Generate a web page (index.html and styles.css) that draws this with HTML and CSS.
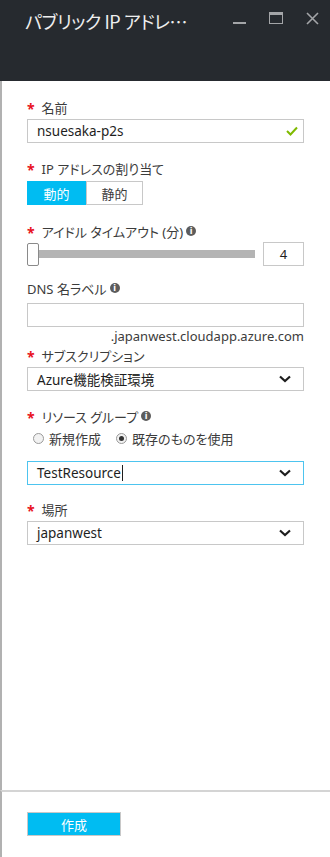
FILE: index.html
```html
<!DOCTYPE html>
<html lang="ja">
<head>
  <meta charset="UTF-8">
  <meta name="viewport" content="width=device-width, initial-scale=1.0">
  <title>パブリック IP アドレス</title>
  <link rel="stylesheet" href="styles.css">
</head>
<body>
  <div class="blade">
    <div class="blade-header">
      <h1 class="blade-title">パブリック IP アドレ…</h1>
      <div class="blade-controls">
        <span class="ctl ctl-min"></span>
        <span class="ctl ctl-max"></span>
        <svg class="ctl-close" width="13" height="13" viewBox="0 0 13 13">
          <path d="M1 1 L12 12 M12 1 L1 12" stroke="#a3a5a8" stroke-width="1.6" fill="none"/>
        </svg>
      </div>
    </div>

    <div class="blade-content">
      <div class="field field-name">
        <label class="field-label"><span class="req">*</span>名前</label>
        <div class="input-box">
          <span class="input-text">nsuesaka-p2s</span>
          <svg class="check" width="12" height="10" viewBox="0 0 12 10">
            <path d="M1 5 L4.5 8.5 L11 1.5" stroke="#7fba00" stroke-width="2" fill="none"/>
          </svg>
        </div>
      </div>

      <div class="field field-ip">
        <label class="field-label"><span class="req">*</span>IP アドレスの割り当て</label>
        <div class="toggle">
          <span class="toggle-opt active">動的</span>
          <span class="toggle-opt">静的</span>
        </div>
      </div>

      <div class="field field-timeout">
        <label class="field-label"><span class="req">*</span>アイドル タイムアウト (分)<span class="info">i</span></label>
        <div class="slider-row">
          <span class="slider-thumb"></span>
          <span class="slider-track"></span>
          <span class="slider-value">4</span>
        </div>
      </div>

      <div class="field field-dns">
        <label class="field-label">DNS 名ラベル<span class="info">i</span></label>
        <div class="input-box"></div>
        <div class="suffix">.japanwest.cloudapp.azure.com</div>
      </div>

      <div class="field field-sub">
        <label class="field-label"><span class="req">*</span>サブスクリプション</label>
        <div class="input-box select">
          <span class="input-text">Azure機能検証環境</span>
          <svg class="chevron" width="12" height="8" viewBox="0 0 12 8"><path d="M1 1.5 L6 6 L11 1.5" stroke="#1e1e1e" stroke-width="2.2" fill="none"/></svg>
        </div>
      </div>

      <div class="field field-rg">
        <label class="field-label"><span class="req">*</span>リソース グループ<span class="info">i</span></label>
        <div class="radio-row">
          <span class="radio"><span class="radio-dot"></span>新規作成</span>
          <span class="radio checked"><span class="radio-dot"></span>既存のものを使用</span>
        </div>
        <div class="input-box select focused">
          <span class="input-text">TestResource<span class="caret"></span></span>
          <svg class="chevron" width="12" height="8" viewBox="0 0 12 8"><path d="M1 1.5 L6 6 L11 1.5" stroke="#1e1e1e" stroke-width="2.2" fill="none"/></svg>
        </div>
      </div>

      <div class="field field-loc">
        <label class="field-label"><span class="req">*</span>場所</label>
        <div class="input-box select">
          <span class="input-text">japanwest</span>
          <svg class="chevron" width="12" height="8" viewBox="0 0 12 8"><path d="M1 1.5 L6 6 L11 1.5" stroke="#1e1e1e" stroke-width="2.2" fill="none"/></svg>
        </div>
      </div>
    </div>

    <div class="blade-footer">
      <button class="create-btn">作成</button>
    </div>
  </div>
</body>
</html>
```

FILE: styles.css
```css
body {
  margin: 0;
  font-family: "Noto Sans", "Noto Sans CJK JP", sans-serif;
  font-feature-settings: "palt";
  background: #fff;
}

.blade {
  display: flex;
  flex-direction: column;
  height: 100vh;
  width: 330px;
}

.blade-header {
  height: 81px;
  background: #262a2f;
  display: flex;
  align-items: flex-start;
  justify-content: space-between;
  padding: 0 11px 0 25px;
}

.blade-title {
  margin: 7px 0 0;
  font-family: "Noto Sans CJK JP", sans-serif;
  font-size: 18px;
  font-weight: normal;
  line-height: 28px;
  color: #eeeeee;
  letter-spacing: -0.4px;
}

.blade-controls {
  display: flex;
  align-items: flex-start;
  padding-top: 12px;
}

.ctl-min {
  width: 13px;
  height: 2px;
  background: #a3a5a8;
  margin-top: 10px;
}

.ctl-max {
  width: 12px;
  height: 8px;
  border: 1.5px solid #a3a5a8;
  border-top-width: 3px;
  margin-left: 23px;
}

.ctl-close {
  margin-left: 23px;
}

.blade-content {
  flex: 1;
  border-left: 2px solid #b1b1b1;
  padding: 17px 26px 0 25px;
}

.field-label {
  display: flex;
  align-items: center;
  height: 18px;
  font-size: 13px;
  color: #3c3c3c;
  margin-bottom: 3px;
}

.req {
  color: #e81123;
  font-weight: bold;
  font-size: 14px;
  margin-right: 7px;
  margin-top: 2px;
}

.info {
  display: inline-flex;
  align-items: center;
  justify-content: center;
  width: 10px;
  height: 10px;
  border-radius: 50%;
  background: #5c5c5c;
  color: #fff;
  font-family: "DejaVu Sans", sans-serif;
  font-size: 8px;
  font-weight: bold;
  margin-left: 3px;
}

.input-box {
  box-sizing: border-box;
  height: 24px;
  border: 1px solid #c8c8c8;
  display: flex;
  align-items: center;
  justify-content: space-between;
  padding: 0 4px 0 9px;
}

.input-text {
  font-size: 13.5px;
  color: #1e1e1e;
  display: flex;
  align-items: center;
}

.check {
  margin-right: 1px;
}

.select .chevron {
  margin-right: 8px;
}

.focused {
  border-color: #4dc4ef;
}

.caret {
  display: inline-block;
  width: 1px;
  height: 16px;
  background: #1e1e1e;
  margin-left: 1px;
}

.field-name {
  margin-bottom: 16px;
}

.field-ip {
  margin-bottom: 17px;
}

.field-ip .field-label {
  margin-bottom: 4px;
}

.toggle {
  display: flex;
  width: 116px;
  height: 24px;
  box-sizing: border-box;
  border: 1px solid #c8c8c8;
}

.toggle-opt {
  flex: 1;
  display: flex;
  align-items: center;
  justify-content: center;
  font-size: 13px;
  color: #3c3c3c;
}

.toggle-opt.active {
  flex: 0 0 59px;
  background: #00bcf2;
  color: #fff;
  margin: -1px 0 -1px -1px;
  border-right: 1px solid #c8c8c8;
}

.field-timeout {
  margin-bottom: 13px;
}

.field-timeout .field-label {
  margin-bottom: 2px;
}

.slider-row {
  display: flex;
  align-items: center;
  height: 24px;
}

.slider-thumb {
  box-sizing: border-box;
  width: 12px;
  height: 23px;
  border: 1px solid #8a8a8a;
  border-radius: 2px;
  background: #fff;
}

.slider-track {
  flex: 1;
  height: 8px;
  background: #b4b4b4;
}

.slider-value {
  box-sizing: border-box;
  width: 41px;
  height: 24px;
  margin-left: 8px;
  border: 1px solid #c8c8c8;
  display: flex;
  align-items: center;
  justify-content: center;
  font-size: 13px;
  color: #1e1e1e;
}

.field-dns .field-label {
  margin-bottom: 6px;
}

.suffix {
  text-align: right;
  font-size: 13px;
  color: #3c3c3c;
  line-height: 19px;
}

.field-sub {
  margin-bottom: 16px;
}

.radio-row {
  display: flex;
  align-items: center;
  height: 18px;
  margin-top: 4px;
  margin-bottom: 14px;
  padding-left: 6px;
}

.radio {
  display: flex;
  align-items: center;
  font-size: 13px;
  color: #3c3c3c;
  margin-right: 15px;
}

.radio-dot {
  box-sizing: border-box;
  width: 11px;
  height: 11px;
  border-radius: 50%;
  border: 1px solid #9a9a9a;
  background: #f2f2f2;
  margin-right: 5px;
  display: flex;
  align-items: center;
  justify-content: center;
}

.radio.checked .radio-dot::after {
  content: "";
  width: 5px;
  height: 5px;
  border-radius: 50%;
  background: #333;
}

.field-rg {
  margin-bottom: 15px;
}

.blade-footer {
  border-left: 2px solid #b1b1b1;
  border-top: 2px solid #d4d4d4;
  padding: 20px 0 21px 25px;
}

.create-btn {
  display: block;
  box-sizing: border-box;
  width: 94px;
  height: 24px;
  margin: 0;
  padding: 0;
  background: #00bcf2;
  border: 1px solid #c8c8c8;
  color: #fff;
  font-family: inherit;
  font-size: 13px;
}
```
